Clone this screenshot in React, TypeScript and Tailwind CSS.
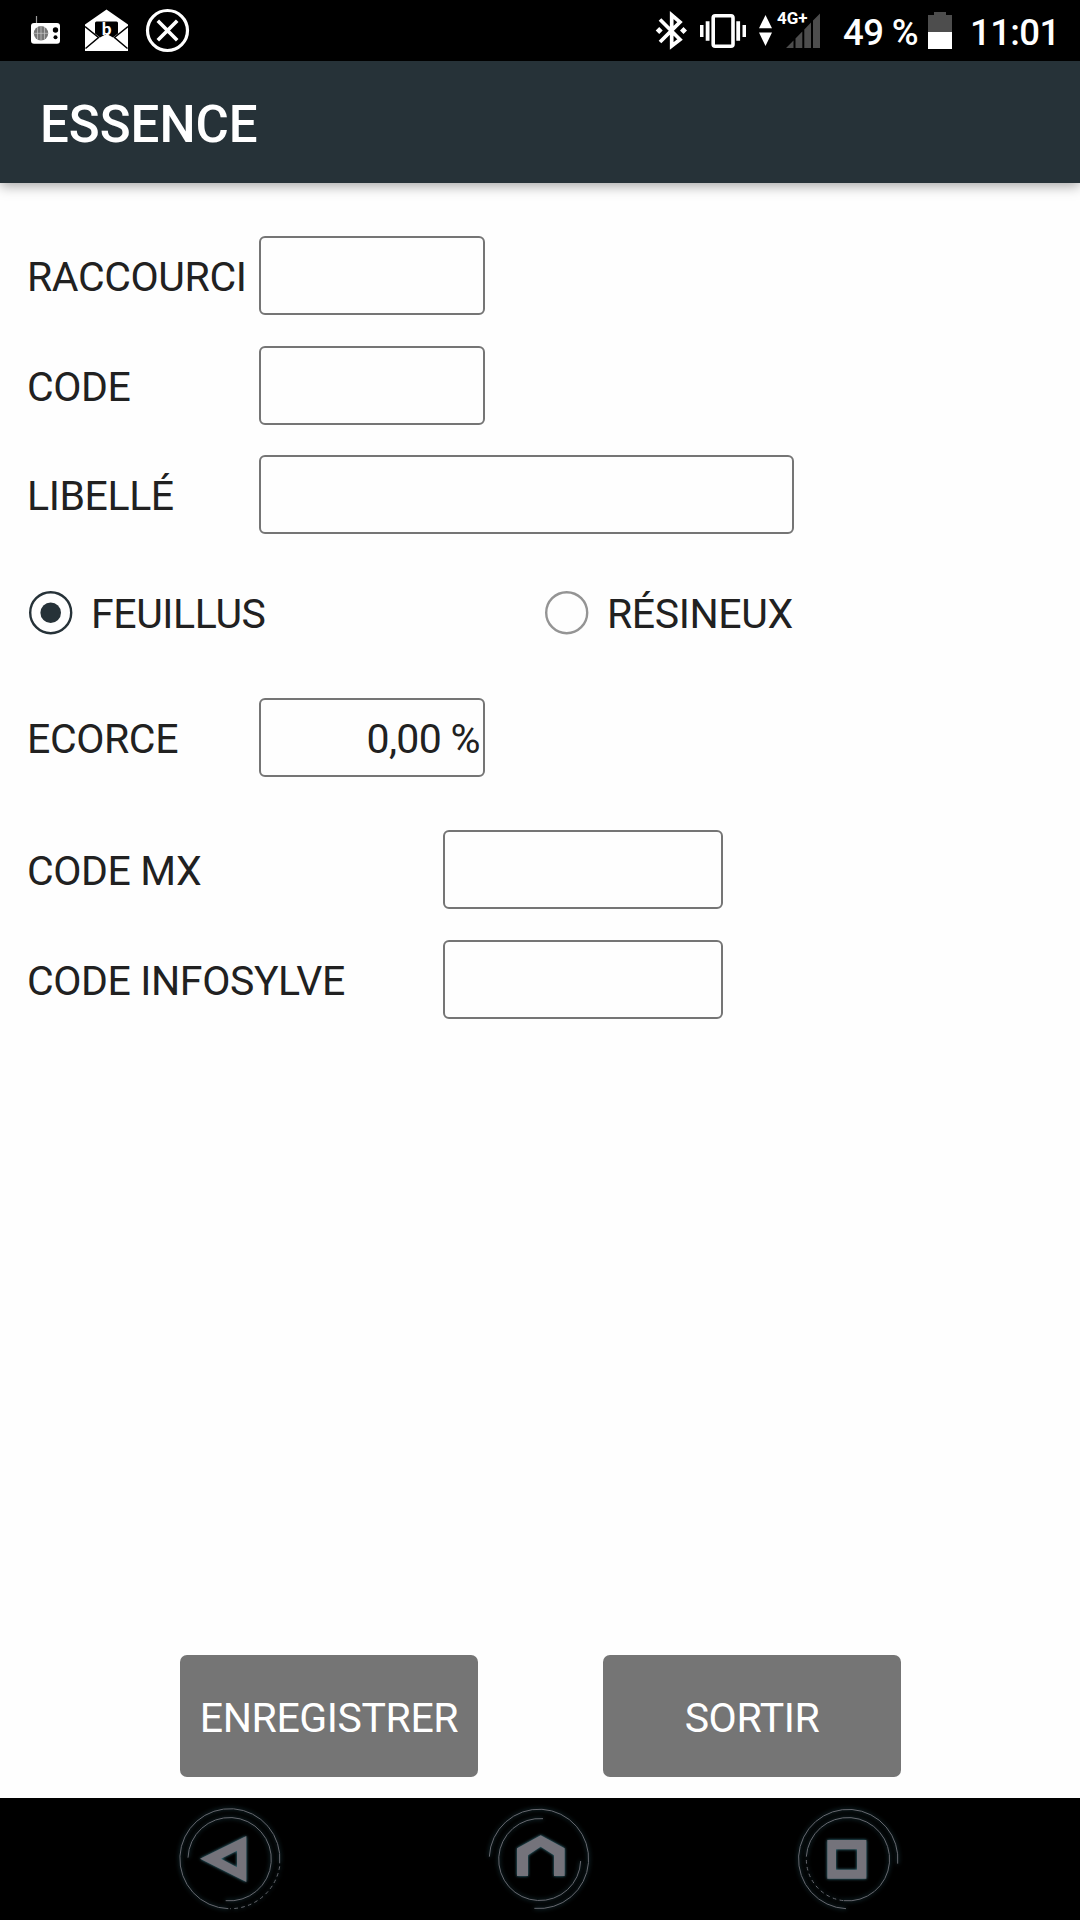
import { useState } from "react";
import clsx from "clsx";

type Kind = "feuillus" | "resineux";

interface FieldProps {
  label: string;
  value: string;
  onChange: (value: string) => void;
  labelClass?: string;
  inputClass?: string;
  className?: string;
}

function StatusBar() {
  return (
    <div className="flex h-[61px] shrink-0 items-start bg-black tracking-normal text-white">
      {/* Notifications */}
      <svg className="ml-[30px] h-[61px] w-[31px]" viewBox="30 0 31 61">
        <path d="M36.5 16v8" stroke="#999" strokeWidth="1.2" />
        <rect x="31" y="23" width="29" height="20.7" rx="3" fill="#fff" />
        <circle cx="41" cy="33.3" r="7.2" fill="#777" />
        <path d="M37.5 27v12.6M41 26v14.5M44.5 27v12.6M34 33.3h14" stroke="#ccc" strokeWidth="0.7" />
        <circle cx="55.5" cy="30" r="2.7" fill="#000" />
        <circle cx="55.5" cy="37.3" r="2" fill="#000" />
      </svg>
      <svg className="ml-[24px] h-[61px] w-[43px]" viewBox="85 0 43 61">
        <path d="M106.5 9.5 128 24.5V51H85V24.5z" fill="#fff" />
        <path d="M96.5 21.5h20q1.5 0 1.5 1.5v10.5l-5 4-4.5-2.5h-4l-4.5 2.5-5-4V23q0-1.5 1.5-1.5z" fill="#000" />
        <path d="M85 26.5 98.5 37.5 85.5 48.5M128 26.5 114.5 37.5 127.5 48.5" fill="none" stroke="#000" strokeWidth="1.5" />
        <path d="M86 50 104 38q2.5-1.6 5 0L127.5 50z" fill="#fff" />
        <text x="106.7" y="35" textAnchor="middle" fill="#fff" fontFamily="Lato, sans-serif" fontSize="17" fontWeight="900">
          b
        </text>
      </svg>
      <svg className="ml-[17px] h-[61px] w-[45px]" viewBox="145 0 45 61" fill="none" stroke="#fff">
        <circle cx="167.5" cy="30.5" r="20" strokeWidth="3.2" />
        <path d="M157.8 20.8 177.2 40.2M177.2 20.8 157.8 40.2" strokeWidth="3.6" />
      </svg>

      {/* System icons */}
      <svg className="ml-auto h-[61px] w-[32px]" viewBox="655 0 32 61">
        <path d="M660 19.5 680 39.5 671.7 46V15L680 22 660 42" fill="none" stroke="#fff" strokeWidth="3.7" />
        <path d="M659.2 27l3.5 3.5-3.5 3.5-3.5-3.5zM683.5 27l3.5 3.5-3.5 3.5-3.5-3.5z" fill="#fff" />
      </svg>
      <svg className="ml-[12px] h-[61px] w-[48px]" viewBox="699 0 48 61" fill="#fff">
        <rect x="713.2" y="15.7" width="19.8" height="30.6" rx="2" fill="none" stroke="#fff" strokeWidth="3.6" />
        <path d="M700 25h3.5v12H700zM705.7 21.3h3.8v19.4h-3.8zM736.3 21.3h3.8v19.4h-3.8zM742.5 25h3.5v12h-3.5z" />
      </svg>
      <svg className="ml-[11px] h-[61px] w-[15px]" viewBox="758 0 15 61" fill="#fff">
        <path d="M765.5 15 772 28.3H759zM759 32.6H772L765.5 46z" />
      </svg>
      <div className="relative ml-[3px] h-[61px] w-[45px]">
        <svg className="h-[61px] w-[45px]" viewBox="776 0 45 61">
          <path
            d="M786 48 793.5 40.5V48zM795.5 38.5 802.3 31.5V48H795.5zM804.3 29.5 811 22.5V48H804.3zM813 20.5 820 13.5V48H813z"
            fill="#4d4d4d"
          />
        </svg>
        <span className="absolute left-[1px] top-[9px] text-[17px] font-bold leading-[18px]">4G+</span>
      </div>
      <span className="ml-[22px] mt-[11px] w-[75px] whitespace-nowrap text-[36.5px] font-medium leading-[44px] tracking-[-0.6px]">
        49 %
      </span>
      <svg className="ml-[10px] h-[61px] w-[24px]" viewBox="928 0 24 61">
        <path d="M934 12h12v3h6v17h-24V15h6z" fill="#4d4d4d" />
        <path d="M928 32h24v17h-24z" fill="#fff" />
      </svg>
      <span className="ml-[18px] mr-[20px] mt-[11px] w-[90px] whitespace-nowrap text-[36.5px] font-medium leading-[44px] tracking-[-0.6px]">
        11:01
      </span>
    </div>
  );
}

function Field({ label, value, onChange, labelClass = "w-[232px]", inputClass = "w-[226px]", className }: FieldProps) {
  return (
    <label className={clsx("flex h-[79px] items-center", className)}>
      <span className={clsx("shrink-0 whitespace-nowrap pt-[3px]", labelClass)}>{label}</span>
      <input
        type="text"
        value={value}
        onChange={(e) => onChange(e.target.value)}
        className={clsx(
          "h-[79px] rounded-[6px] border-2 border-[#757575] pr-[3px] pt-[3px] text-right tracking-[-0.65px] outline-none",
          inputClass
        )}
      />
    </label>
  );
}

interface RadioProps {
  label: string;
  checked: boolean;
  onSelect: () => void;
  className?: string;
}

function Radio({ label, checked, onSelect, className }: RadioProps) {
  return (
    <button
      type="button"
      role="radio"
      aria-checked={checked}
      onClick={onSelect}
      className={clsx("flex items-center gap-[18px]", className)}
    >
      <svg className="h-[44px] w-[44px]" viewBox="0 0 44 44">
        <circle cx="21.7" cy="21.7" r="20.5" fill="none" stroke={checked ? "#263238" : "#949494"} strokeWidth="2.4" />
        {checked && <circle cx="21.7" cy="21.7" r="10.3" fill="#263238" />}
      </svg>
      <span className="pt-[2px]">{label}</span>
    </button>
  );
}

// Each button is a glyph surrounded by two partial rings with a faint teal glow
function NavBar() {
  const svgClass = "h-[122px] w-[140px]";
  const ringGlow = "drop-shadow-[0_0_7px_#2f6573]";
  const glyphGlow = "drop-shadow-[0_0_5px_#3f8797]";
  return (
    <div className="flex h-[122px] shrink-0 gap-[170px] bg-black pl-[160px]">
      <svg className={svgClass} viewBox="0 9 420 366">
        <g className={ringGlow} fill="none" stroke="#67686f" strokeWidth="3">
          <path d="M359 205A150 150 0 1 0 205 341" />
          <path d="M359 214A150 150 0 0 1 210 341" strokeDasharray="11 10" />
          <path d="M84 188A125 125 0 1 1 197 317" />
        </g>
        <path className={glyphGlow} fill="#74737b" fillRule="evenodd" d="M120 191 259 123V261zM183 191 231 217V167z" />
      </svg>
      <svg className={svgClass} viewBox="0 9 420 366">
        <g className={ringGlow} fill="none" stroke="#67686f" strokeWidth="3">
          <path d="M58 185A149 149 0 1 1 193 340" />
          <path d="M219 71A123 123 0 1 0 332 198" />
        </g>
        <path
          className={glyphGlow}
          fill="#74737b"
          d="M212 121 284 160V243H252V181L212 155 174 181V243H141V160z"
        />
      </svg>
      <svg className={svgClass} viewBox="0 9 420 366">
        <g className={ringGlow} fill="none" stroke="#67686f" strokeWidth="3">
          <path d="M353 206A149 149 0 1 0 198 341" />
          <path d="M79 185A125 125 0 1 1 191 317" />
          <path d="M79 195A125 125 0 0 0 191 317" strokeDasharray="11 10" />
        </g>
        <path className={glyphGlow} fill="#74737b" fillRule="evenodd" d="M142 135H259V251H142zM168 163V224H231V163z" />
      </svg>
    </div>
  );
}

export default function App() {
  const [raccourci, setRaccourci] = useState("");
  const [code, setCode] = useState("");
  const [libelle, setLibelle] = useState("");
  const [kind, setKind] = useState<Kind>("feuillus");
  const [ecorce, setEcorce] = useState("0,00 %");
  const [codeMx, setCodeMx] = useState("");
  const [codeInfosylve, setCodeInfosylve] = useState("");

  return (
    <div className="flex h-[1920px] w-[1080px] flex-col overflow-hidden bg-[#fefefe] font-[Roboto,sans-serif] text-[41px] leading-[48px] tracking-[-0.4px] text-[#212121]">
      <StatusBar />

      <header className="flex h-[122px] shrink-0 items-center bg-[#263238] pl-[40px] pt-[5px] text-[51px] font-medium tracking-normal text-white shadow-[0_3px_12px_rgba(0,0,0,0.35)]">
        <h1>ESSENCE</h1>
      </header>

      <main className="flex flex-1 flex-col pl-[27px] pt-[53px]">
        <Field label="RACCOURCI" value={raccourci} onChange={setRaccourci} />
        <Field label="CODE" value={code} onChange={setCode} className="mt-[31px]" />
        <Field label="LIBELLÉ" value={libelle} onChange={setLibelle} inputClass="w-[535px]" className="mt-[30px]" />

        <div role="radiogroup" className="mt-[54px] flex h-[50px] items-center pl-[2px]">
          <Radio
            label="FEUILLUS"
            checked={kind === "feuillus"}
            onSelect={() => setKind("feuillus")}
            className="w-[516px]"
          />
          <Radio label="RÉSINEUX" checked={kind === "resineux"} onSelect={() => setKind("resineux")} />
        </div>

        <Field label="ECORCE" value={ecorce} onChange={setEcorce} className="mt-[60px]" />
        <Field
          label="CODE MX"
          value={codeMx}
          onChange={setCodeMx}
          labelClass="w-[416px]"
          inputClass="w-[280px]"
          className="mt-[53px]"
        />
        <Field
          label="CODE INFOSYLVE"
          value={codeInfosylve}
          onChange={setCodeInfosylve}
          labelClass="w-[416px]"
          inputClass="w-[280px]"
          className="mt-[31px]"
        />

        <div className="mb-[21px] mt-auto flex gap-[125px] pl-[153px]">
          <button type="button" className="h-[122px] w-[298px] rounded-[7px] bg-[#757575] pt-[4px] text-white">
            ENREGISTRER
          </button>
          <button type="button" className="h-[122px] w-[298px] rounded-[7px] bg-[#757575] pt-[4px] text-white">
            SORTIR
          </button>
        </div>
      </main>

      <NavBar />
    </div>
  );
}
